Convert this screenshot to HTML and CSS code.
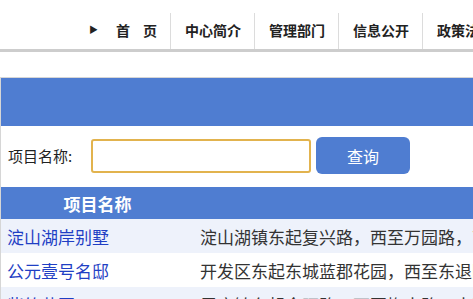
FILE: index.html
```html
<!DOCTYPE html>
<html lang="zh-CN">
<head>
  <meta charset="UTF-8">
  <meta name="viewport" content="width=device-width, initial-scale=1">
  <title>项目查询</title>
  <link rel="stylesheet" href="styles.css">
</head>
<body>
  <div class="topnav">
    <a class="nav-item home"><span class="arrow">▶</span>首<span class="sp">页</span></a>
    <a class="nav-item">中心简介</a>
    <a class="nav-item">管理部门</a>
    <a class="nav-item">信息公开</a>
    <a class="nav-item">政策法规</a>
    <a class="nav-item">办事指南</a>
  </div>

  <div class="main">
    <div class="bar"></div>
    <div class="search">
      <label for="name">项目名称:</label>
      <input type="text" id="name">
      <button>查询</button>
    </div>
    <table class="list">
      <thead>
        <tr>
          <th class="col-name">项目名称</th>
          <th></th>
        </tr>
      </thead>
      <tbody>
        <tr>
          <td><a href="#">淀山湖岸别墅</a></td>
          <td>淀山湖镇东起复兴路，西至万园路，南至湖滨路，北至淀兴路</td>
        </tr>
        <tr>
          <td><a href="#">公元壹号名邸</a></td>
          <td>开发区东起东城蓝郡花园，西至东退园路，南至前进路</td>
        </tr>
        <tr>
          <td><a href="#">紫竹花园</a></td>
          <td>周庄镇东起全旺路，西至梅南路，南至大桥路</td>
        </tr>
      </tbody>
    </table>
  </div>
</body>
</html>
```

FILE: styles.css
```css
body {
  margin: 0;
  background: #fff;
  font-family: "Noto Sans CJK SC", "Noto Sans", sans-serif;
  color: #333;
  overflow: hidden;
}

.topnav {
  display: flex;
  height: 49px;
  padding-left: 77px;
  border-bottom: 3px solid #cdcdcd;
  white-space: nowrap;
}

.nav-item {
  display: flex;
  align-items: center;
  margin-top: 13px;
  padding: 0 13px 3px 14px;
  border-right: 1px solid #dcdcdc;
  font-size: 14px;
  font-weight: bold;
  color: #222;
}

.nav-item.home {
  padding-left: 12px;
}

.nav-item .arrow {
  font-size: 9px;
  margin-right: 18px;
}

.nav-item .sp {
  margin-left: 13px;
}

.main {
  width: 1000px;
  margin-top: 25px;
  border-top: 1px solid #d6d6d6;
  border-left: 1px solid #d6d6d6;
}

.bar {
  height: 48px;
  background: #4f7dd1;
}

.search {
  display: flex;
  align-items: center;
  padding: 11px 0 13px 7px;
  font-size: 15px;
  color: #222;
}

.search label {
  width: 83px;
}

.search input {
  width: 204px;
  height: 30px;
  margin: 0;
  padding: 0 6px;
  border: 2px solid #e2b34e;
  border-radius: 3px;
  box-sizing: content-box;
  outline: none;
}

.search button {
  width: 94px;
  height: 37px;
  margin-left: 5px;
  border: none;
  border-radius: 6px;
  background: #4f7dd1;
  color: #fff;
  font-family: inherit;
  font-size: 16px;
}

.list {
  width: 100%;
  border-collapse: collapse;
  font-size: 17px;
}

.list th {
  height: 32px;
  padding: 0;
  background: #4f7dd1;
  color: #fff;
  font-weight: bold;
  text-align: center;
}

.list .col-name {
  width: 193px;
}

.list td {
  height: 34px;
  padding: 0 0 0 6px;
  white-space: nowrap;
  color: #333;
}

.list tbody tr:nth-child(odd) {
  background: #eef2fb;
}

.list a {
  color: #1f3fc4;
  text-decoration: none;
}
```
